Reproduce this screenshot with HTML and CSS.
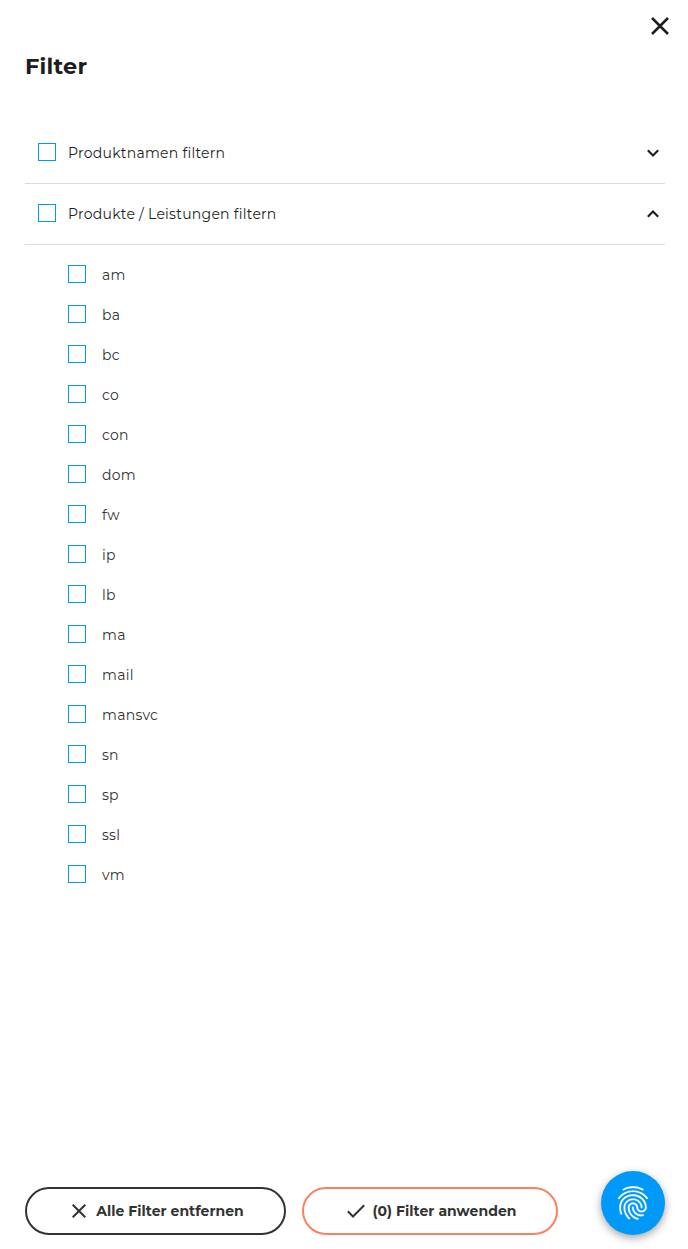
FILE: index.html
```
<!DOCTYPE html>
<html lang="de">
<head>
<meta charset="utf-8">
<title>Filter</title>
<link rel="stylesheet" href="styles.css">
</head>
<body>
<main class="panel">
  <button class="close" aria-label="Schließen"><svg width="18" height="18" viewBox="0 0 18 18"><path d="M1 1 17 17M17 1 1 17"/></svg></button>
  <h1 class="title">Filter</h1>
  <section class="groups">
    <div class="group"><span class="box"></span><span class="group-label">Produktnamen filtern</span><svg class="chevron" width="12" height="8" viewBox="0 0 12 8"><path d="M.8 1.2 6 6.4 11.2 1.2"/></svg></div>
    <div class="group"><span class="box"></span><span class="group-label">Produkte / Leistungen filtern</span><svg class="chevron" width="12" height="8" viewBox="0 0 12 8"><path d="M.8 6.8 6 1.6 11.2 6.8"/></svg></div>
  </section>
  <ul class="options">
    <li><span class="box"></span><span>am</span></li>
    <li><span class="box"></span><span>ba</span></li>
    <li><span class="box"></span><span>bc</span></li>
    <li><span class="box"></span><span>co</span></li>
    <li><span class="box"></span><span>con</span></li>
    <li><span class="box"></span><span>dom</span></li>
    <li><span class="box"></span><span>fw</span></li>
    <li><span class="box"></span><span>ip</span></li>
    <li><span class="box"></span><span>lb</span></li>
    <li><span class="box"></span><span>ma</span></li>
    <li><span class="box"></span><span>mail</span></li>
    <li><span class="box"></span><span>mansvc</span></li>
    <li><span class="box"></span><span>sn</span></li>
    <li><span class="box"></span><span>sp</span></li>
    <li><span class="box"></span><span>ssl</span></li>
    <li><span class="box"></span><span>vm</span></li>
  </ul>
  <footer class="actions">
    <button class="pill clear"><svg width="14" height="14" viewBox="0 0 14 14"><path d="M.7.7 13.3 13.3M13.3.7.7 13.3"/></svg><span>Alle Filter entfernen</span></button>
    <button class="pill apply"><svg width="18" height="14" viewBox="0 0 18 14"><path d="M.8 7.3 6 12.5 17.2 1.2"/></svg><span>(0) Filter anwenden</span></button>
  </footer>
</main>
<button class="privacy" aria-label="Datenschutz"><svg width="40" height="40" viewBox="0 0 24 24"><path d="M17.81 4.47c-.08 0-.16-.02-.23-.06C15.66 3.42 14 3 12.01 3c-1.98 0-3.86.47-5.57 1.41-.24.13-.54.04-.68-.2-.13-.24-.04-.55.2-.68C7.82 2.52 9.86 2 12.01 2c2.13 0 3.99.47 6.03 1.52.25.13.34.43.21.67-.09.18-.26.28-.44.28zM3.5 9.72c-.1 0-.2-.03-.29-.09-.23-.16-.28-.47-.12-.7.99-1.4 2.25-2.5 3.75-3.27C9.98 4.04 14 4.03 17.15 5.65c1.5.77 2.76 1.86 3.75 3.25.16.22.11.54-.12.7-.23.16-.54.11-.7-.12-.9-1.26-2.04-2.25-3.39-2.94-2.87-1.47-6.54-1.47-9.4.01-1.36.7-2.5 1.7-3.4 2.96-.08.14-.23.21-.39.21zm6.25 12.07c-.13 0-.26-.05-.35-.15-.87-.87-1.34-1.43-2.01-2.64-.69-1.23-1.05-2.73-1.05-4.34 0-2.97 2.54-5.39 5.66-5.39s5.66 2.42 5.66 5.39c0 .28-.22.5-.5.5s-.5-.22-.5-.5c0-2.42-2.09-4.39-4.66-4.39-2.57 0-4.66 1.97-4.66 4.39 0 1.44.32 2.77.93 3.85.64 1.15 1.08 1.64 1.85 2.42.19.2.19.51 0 .71-.11.1-.24.15-.37.15zm7.17-1.85c-1.19 0-2.24-.3-3.1-.89-1.49-1.01-2.38-2.65-2.38-4.39 0-.28.22-.5.5-.5s.5.22.5.5c0 1.41.72 2.74 1.94 3.56.71.48 1.54.71 2.54.71.24 0 .64-.03 1.04-.1.27-.05.53.13.58.41.05.27-.13.53-.41.58-.57.11-1.07.12-1.21.12zM14.91 22c-.04 0-.09-.01-.13-.02-1.59-.44-2.63-1.03-3.72-2.1-1.4-1.39-2.17-3.24-2.17-5.22 0-1.62 1.38-2.94 3.08-2.94 1.7 0 3.08 1.32 3.08 2.94 0 1.07.93 1.94 2.08 1.94s2.08-.87 2.08-1.94c0-3.77-3.25-6.83-7.25-6.83-2.84 0-5.44 1.58-6.61 4.03-.39.81-.59 1.76-.59 2.8 0 .78.07 2.01.67 3.61.1.26-.03.55-.29.64-.26.1-.55-.04-.64-.29-.49-1.31-.73-2.61-.73-3.96 0-1.2.23-2.29.68-3.24 1.33-2.79 4.28-4.6 7.51-4.6 4.55 0 8.25 3.51 8.25 7.83 0 1.62-1.38 2.94-3.08 2.94s-3.08-1.32-3.08-2.94c0-1.07-.93-1.94-2.08-1.94s-2.08.87-2.08 1.94c0 1.71.66 3.31 1.87 4.51.95.94 1.86 1.46 3.27 1.85.27.07.42.35.35.61-.05.23-.26.38-.47.38z"/></svg></button>
</body>
</html>
```
FILE: styles.css
```
* { box-sizing: border-box; }
body { margin: 0; background: #fff; color: #1e1e1e; font-family: Montserrat, Inter, sans-serif; font-size: 14px; }
button { margin: 0; padding: 0; border: 0; background: none; font: inherit; color: inherit; }
svg { display: block; fill: none; stroke: currentColor; }
.panel { height: 1249px; padding: 17px 23px 14px 25px; display: flex; flex-direction: column; }
.close { align-self: flex-end; margin-right: -4px; width: 18px; height: 18px; }
.close svg { stroke-width: 2.5; }
.title { margin: 17px 0 0; height: 28px; font-size: 22.4px; line-height: 28px; font-weight: 700; letter-spacing: .24px; }
.groups { margin-top: 43px; }
.group { height: 61px; padding: 0 6px 0 13px; display: flex; align-items: center; border-bottom: 1px solid #dcdcdc; }
.box { flex: none; width: 18px; height: 18px; border: 1px solid #0099f8; position: relative; top: -1px; }
.group-label { margin-left: 12px; flex: 1; letter-spacing: .26px; }
.chevron { stroke-width: 2.1; }
.options { list-style: none; margin: 10px 0 0; padding: 0 0 0 43px; color: #333; }
.options li { height: 40px; display: flex; align-items: center; gap: 16px; letter-spacing: .28px; }
.actions { margin-top: auto; display: flex; gap: 16px; }
.pill { height: 48px; border: 2px solid #333; border-radius: 24px; display: flex; align-items: center; justify-content: center; gap: 10px; padding-left: 3px; font-weight: 700; letter-spacing: .03px; color: #333; }
.pill svg { stroke-width: 2; }
.clear { width: 261px; padding-left: 5px; }
.apply { width: 256px; border-color: #fc805d; gap: 8px; }
.privacy { position: fixed; left: 601px; top: 1171px; width: 64px; height: 64px; border-radius: 50%; background: #0099f8; color: #fff; display: flex; align-items: center; justify-content: center; box-shadow: 0 3px 8px rgba(0, 0, 0, .36); }
.privacy svg { fill: currentColor; stroke: currentColor; stroke-width: .12; }
```
